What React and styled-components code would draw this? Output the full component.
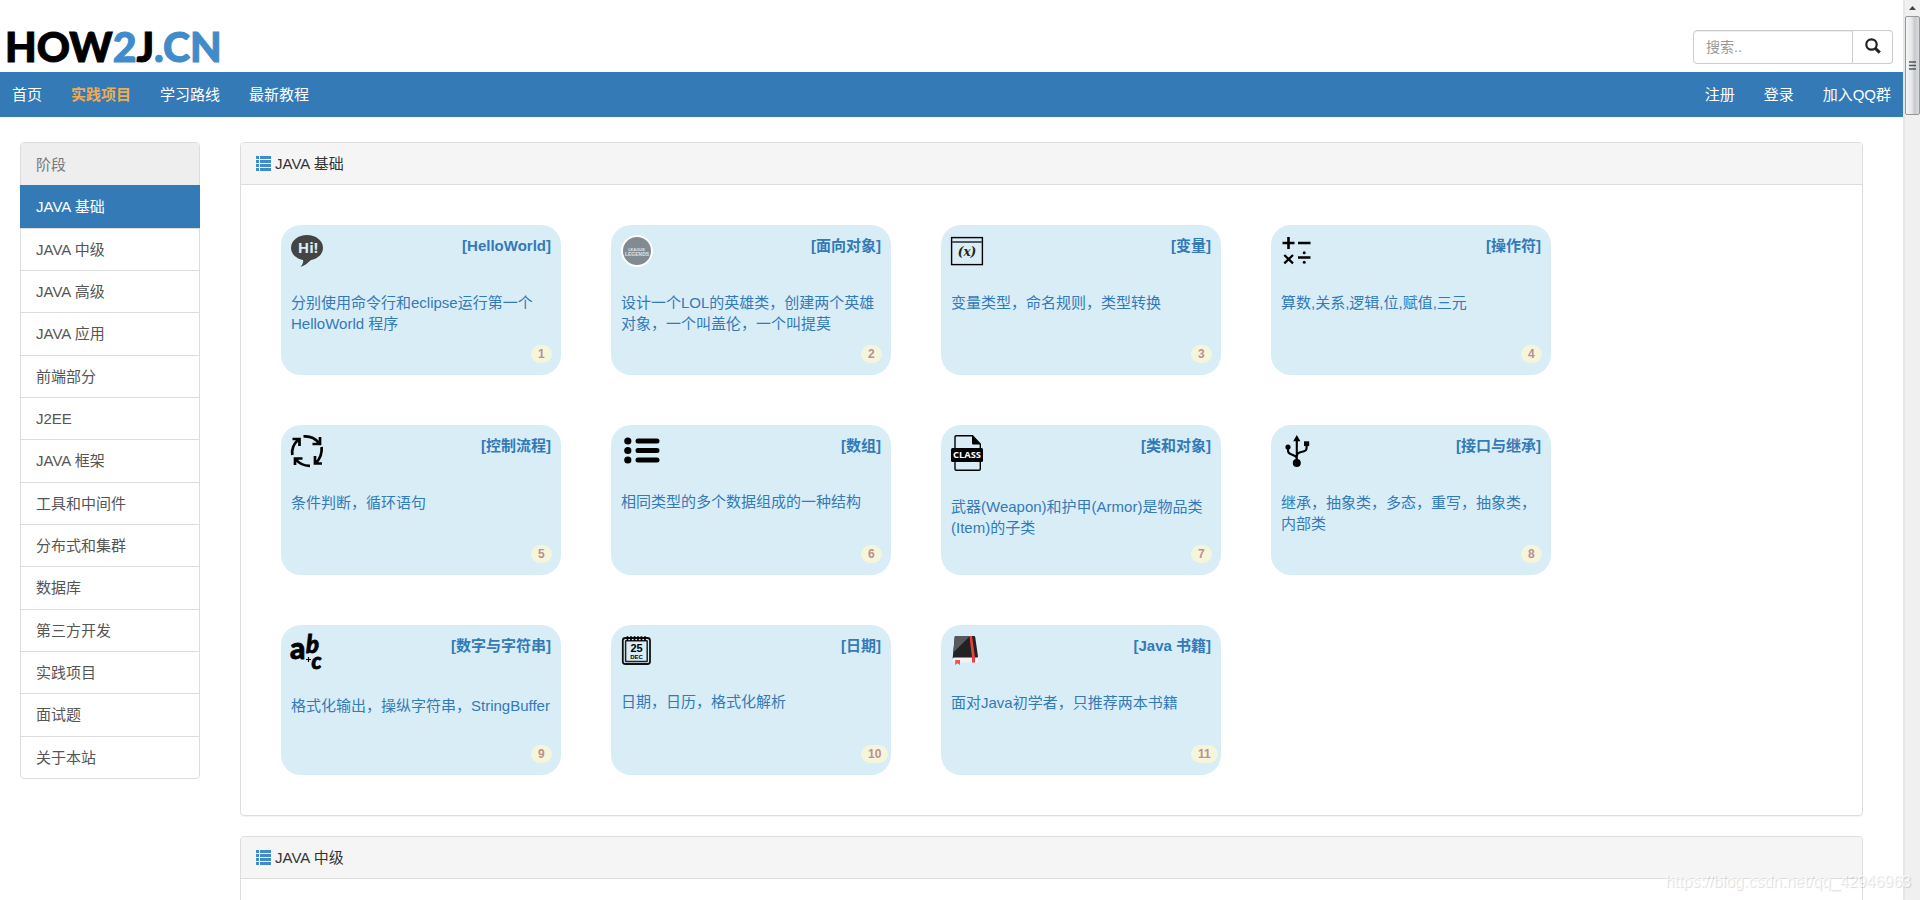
import React from 'react';
import styled, { createGlobalStyle } from 'styled-components';

const GlobalStyle = createGlobalStyle`
    * {
        box-sizing: border-box;
    }
    body {
        margin: 0;
        background: #fff;
        color: #333;
        font-family: "Liberation Sans", Arial, "Noto Sans CJK SC", sans-serif;
        font-size: 15px;
        line-height: 21px;
    }
    a {
        text-decoration: none;
    }
`;

const Window = styled.div`
    position: relative;
    display: flex;
    height: 100vh;
    overflow: hidden;
`;

const Page = styled.div`
    flex: 1;
    min-width: 0;
`;

const Header = styled.header`
    display: flex;
    justify-content: space-between;
    align-items: flex-end;
    height: 72px;
    padding: 0 10px 8px 5px;
`;

const Logo = styled.a`
    font-family: Lato, "Liberation Sans", sans-serif;
    font-size: 41px;
    font-weight: 900;
    line-height: 34px;
    color: #000;
    -webkit-text-stroke: 1px currentColor;
    span {
        color: #428bca;
    }
`;

const SearchForm = styled.form`
    display: flex;
    width: 200px;
    height: 34px;
`;

const SearchInput = styled.input`
    flex: 1;
    min-width: 0;
    padding: 6px 12px;
    border: 1px solid #ccc;
    border-radius: 4px 0 0 4px;
    box-shadow: inset 0 1px 1px rgba(0, 0, 0, 0.075);
    font-family: inherit;
    font-size: 14px;
    color: #555;
    outline: none;
    &::placeholder {
        color: #999;
        opacity: 1;
    }
`;

const SearchButton = styled.button`
    width: 40px;
    padding: 0 0 2px;
    border: 1px solid #ccc;
    border-left: 0;
    border-radius: 0 4px 4px 0;
    background: #fff;
    color: #222;
    cursor: pointer;
    svg {
        display: block;
        margin: 0 auto;
    }
`;

const Nav = styled.nav`
    display: flex;
    justify-content: space-between;
    align-items: center;
    height: 45px;
    padding: 0 12px;
    background: #337ab7;
`;

const NavGroup = styled.div`
    display: flex;
    gap: 29px;
`;

const NavLink = styled.a`
    color: ${props => (props.$active ? '#f0ad4e' : '#fff')};
    font-weight: ${props => (props.$active ? 700 : 400)};
`;

const Main = styled.main`
    display: flex;
    align-items: flex-start;
    gap: 40px;
    padding: 25px 40px 0 20px;
`;

const StageList = styled.div`
    display: grid;
    grid-auto-rows: 1fr;
    flex: 0 0 180px;
    min-height: 637px;
    border: 1px solid #ddd;
    border-radius: 4px;
`;

const stageItem = `
    display: flex;
    align-items: center;
    padding: 0 15px;
`;

const StageTitle = styled.div`
    ${stageItem}
    background: #eee;
    color: #777;
    border-radius: 3px 3px 0 0;
`;

const StageLink = styled.a`
    ${stageItem}
    margin: ${props => (props.$active ? '0 -1px' : '0')};
    padding: ${props => (props.$active ? '0 16px' : '0 15px')};
    border-top: 1px solid ${props => (props.$active ? '#337ab7' : '#ddd')};
    background: ${props => (props.$active ? '#337ab7' : 'transparent')};
    color: ${props => (props.$active ? '#fff' : '#555')};
`;

const Panels = styled.div`
    flex: 1;
    min-width: 0;
`;

const Panel = styled.section`
    margin-bottom: 20px;
    border: 1px solid #ddd;
    border-radius: 4px;
    box-shadow: 0 1px 1px rgba(0, 0, 0, 0.05);
`;

const PanelHeading = styled.h3`
    display: flex;
    align-items: center;
    gap: 4px;
    margin: 0;
    padding: 10px 15px;
    border-bottom: 1px solid #ddd;
    border-radius: 3px 3px 0 0;
    background: #f5f5f5;
    font-size: 15px;
    font-weight: 400;
`;

const PanelBody = styled.div`
    display: flex;
    flex-wrap: wrap;
    gap: 50px;
    min-height: 80px;
    padding: 40px;
`;

const Card = styled.a`
    display: flex;
    flex-direction: column;
    width: 280px;
    height: 150px;
    padding: 10px;
    border-radius: 20px;
    background: #d9edf7;
    color: #337ab7;
`;

const CardTop = styled.div`
    display: flex;
    justify-content: space-between;
    align-items: flex-start;
    margin-bottom: 25px;
    svg {
        display: block;
        overflow: visible;
    }
`;

const CardTitle = styled.strong`
    font-weight: 700;
`;

const CardText = styled.div`
    flex: 1;
`;

/* two digit badges grow to the right, past the padding */
const BadgeSlot = styled.div`
    align-self: flex-end;
    display: flex;
    width: 20px;
    padding-bottom: 2px;
`;

const Badge = styled.span`
    padding: 3px 7px;
    border-radius: 10px;
    background: #f5f5dc;
    color: #bc8f8f;
    font-size: 12px;
    font-weight: 700;
    line-height: 12px;
`;

const ScrollRail = styled.div`
    flex: 0 0 17px;
    display: flex;
    flex-direction: column;
    align-items: center;
    border-left: 2px solid #e6e6e6;
    background: #f0f0f0;
`;

const ScrollArrow = styled.div`
    display: flex;
    align-items: center;
    height: 16px;
`;

const ScrollThumb = styled.div`
    display: flex;
    align-items: center;
    justify-content: center;
    width: 15px;
    height: 99px;
    border: 1px solid #979797;
    border-radius: 2px;
    background: linear-gradient(to right, #f5f5f5 0%, #e6e6e8 45%, #c9cacd 65%, #d9dadc 100%);
`;

const Watermark = styled.div`
    position: absolute;
    right: 9px;
    bottom: 8px;
    font-size: 16px;
    color: rgba(255, 255, 255, 0.8);
    text-shadow: 1px 1px 1px rgba(0, 0, 0, 0.15);
`;

const SearchIcon = () => (
    <svg width="16" height="16" viewBox="0 0 16 16" fill="none" stroke="currentColor">
        <circle cx="6.5" cy="6.5" r="5.2" strokeWidth="2.2" />
        <path d="M10.3 10.3 L14.8 14.6" strokeWidth="3" />
    </svg>
);

const ListIcon = () => (
    <svg width="15" height="15" viewBox="0 0 15 15" fill="#428bca">
        {[0, 4, 8, 12].map(y => (
            <React.Fragment key={y}>
                <rect x="0" y={y} width="3" height="3" />
                <rect x="4" y={y} width="11" height="3" />
            </React.Fragment>
        ))}
    </svg>
);

const HelloIcon = () => (
    <svg width="32" height="32" viewBox="0 0 32 32">
        <ellipse cx="16" cy="12.8" rx="16" ry="12.8" fill="#444" />
        <path d="M12 24 Q13 28 9.5 32 Q17 29 20.5 24 Z" fill="#444" />
        <text x="17" y="18" textAnchor="middle" fontFamily="Open Sans, sans-serif" fontSize="15" fontWeight="700" fill="#d9edf7">Hi!</text>
    </svg>
);

const LeagueIcon = () => (
    <svg width="32" height="32" viewBox="0 0 32 32">
        <circle cx="16" cy="16" r="15" fill="#838b92" stroke="#fff" strokeWidth="2" />
        <g fill="#dde2e6" textAnchor="middle" fontFamily="Liberation Sans, sans-serif" fontWeight="700">
            <text x="15.5" y="15.5" fontSize="4">LEAGUE</text>
            <text x="16" y="21" fontSize="5">LEGENDS</text>
        </g>
    </svg>
);

const VariableIcon = () => (
    <svg width="32" height="32" viewBox="0 0 32 32">
        <rect x="0.6" y="2.6" width="30.8" height="27" fill="none" stroke="#000" strokeWidth="1.4" />
        <path d="M1 7 H31" stroke="#555a5e" strokeWidth="2" />
        <text x="16" y="21" textAnchor="middle" fontFamily="DejaVu Serif, serif" fontSize="12" fontStyle="italic" fontWeight="700" fill="#222">(x)</text>
    </svg>
);

const OperatorIcon = () => (
    <svg width="32" height="32" viewBox="0 0 32 32" fill="none" stroke="#000" strokeWidth="2.6">
        <path d="M1.5 8 H13.5 M7.5 2 V14 M17 8 H29.5 M17 22.5 H29.5" />
        <path d="M3.3 20 L12 28.3 M12 20 L3.3 28.3" strokeWidth="2.3" />
        <circle cx="23.2" cy="17.8" r="1.5" fill="#000" stroke="none" />
        <circle cx="23.2" cy="27.2" r="1.5" fill="#000" stroke="none" />
    </svg>
);

const FlowIcon = () => (
    <svg width="32" height="32" viewBox="0 0 32 32" fill="none" stroke="#000" strokeWidth="2.7">
        <path d="M12.5 1.4 Q22 0.5 28 8 M29 2 V9 H21.5" />
        <path d="M1.4 20 Q0 11 7.5 4.5 M1.5 4 H8.5 V11" />
        <path d="M19 30.8 Q10 31 4.5 24 M4 30 V23.5 H11.5" />
        <path d="M30.6 12 Q31.5 21 25 28 M24 21 V28.5 H31" />
    </svg>
);

const ArrayIcon = () => (
    <svg width="40" height="31" viewBox="0 0 40 31" stroke="#000" strokeLinecap="round">
        {[6, 15.5, 25].map(y => (
            <React.Fragment key={y}>
                <circle cx="6.8" cy={y} r="3.6" stroke="none" />
                <path d={`M17 ${y} H36`} strokeWidth="5" />
            </React.Fragment>
        ))}
    </svg>
);

const ClassIcon = () => (
    <svg width="32" height="36" viewBox="0 0 32 36">
        <path d="M4 14 V2 Q4 0.7 5.3 0.7 H21.5 L29.3 9 V34 Q29.3 35.3 28 35.3 H5.3 Q4 35.3 4 34 Z" fill="none" stroke="#000" strokeWidth="1.4" />
        <path d="M21 0.7 L29.5 9.5 H22 Q21 9.5 21 8.5 Z" />
        <rect x="0" y="13" width="32" height="14" rx="1.5" />
        <text x="16" y="23.4" textAnchor="middle" fontFamily="Open Sans, sans-serif" fontSize="9.4" fontWeight="700" fill="#fff">CLASS</text>
    </svg>
);

const InterfaceIcon = () => (
    <svg width="32" height="32" viewBox="0 0 32 32">
        <path d="M15.8 0 L19.4 6.2 H12.2 Z" />
        <circle cx="15.8" cy="28" r="4" />
        <circle cx="7" cy="12" r="2.6" />
        <rect x="23" y="6.3" width="5.2" height="4.8" />
        <path d="M15.8 5 V28 M7 12 V15.5 Q7 18 9.5 19 L13 20.5 Q15.8 21.5 15.8 24 M25.6 10 V13 Q25.6 15.5 23 16.2 L18.5 17.5 Q15.8 18.3 15.8 21" fill="none" stroke="#000" strokeWidth="2.1" />
    </svg>
);

const StringIcon = () => (
    <svg width="32" height="35" viewBox="0 0 32 35" fontFamily="Lato, sans-serif" fontWeight="900" stroke="#000" strokeWidth="0.8">
        <text x="-1" y="23.5" fontSize="30">a</text>
        <text x="15" y="17.5" fontSize="24" fontStyle="italic">b</text>
        <text x="20.5" y="34" fontSize="22" fontStyle="italic">c</text>
        <path d="M15 24.5 H20 M17.5 22 V27" strokeWidth="1.2" />
    </svg>
);

const DateIcon = () => (
    <svg width="32" height="31" viewBox="0 0 32 31">
        <rect x="1.8" y="3" width="27.2" height="26" rx="2.5" fill="none" stroke="#111" strokeWidth="1.8" />
        <rect x="4.6" y="5.8" width="21.6" height="20.6" rx="0.5" fill="none" stroke="#222" strokeWidth="1.5" />
        <path d="M6.5 1.2 V6 M10 1.2 V6 M13.5 1.2 V6 M17 1.2 V6 M20.5 1.2 V6 M24 1.2 V6" stroke="#000" strokeWidth="1.7" />
        <g textAnchor="middle" fontFamily="Liberation Sans Narrow, Liberation Sans, sans-serif" fontWeight="700">
            <text x="15.5" y="17.2" fontSize="11">25</text>
            <text x="15.5" y="24.4" fontSize="6">DEC</text>
        </g>
    </svg>
);

const BookIcon = () => (
    <svg width="32" height="32" viewBox="0 0 32 32">
        <path d="M2 23 H27 V27.5 H3.5 Q1.3 27 1.5 24.5 Z" fill="#f2f2f4" />
        <path d="M4.5 1 H23 Q24 1 24.2 2 L27 21.5 Q27 22.6 26 22.6 H3 Q1.8 22.8 1.6 24 L3.7 2 Q3.8 1 4.5 1 Z" fill="#222" />
        <path d="M4.5 1 H19 L2.4 17.5 L3.7 2 Q3.8 1 4.5 1 Z" fill="#58595e" />
        <path d="M18.5 1 H21 L24 22.5 V27.5 H21 V22.5 Z" fill="#e8403f" />
        <path d="M4.2 25 H9 V30 L6.6 28.2 L4.2 30 Z" fill="#f0504e" />
    </svg>
);

const navLeft = ['首页', '实践项目', '学习路线', '最新教程'];
const navRight = ['注册', '登录', '加入QQ群'];

const stages = [
    'JAVA 基础', 'JAVA 中级', 'JAVA 高级', 'JAVA 应用', '前端部分', 'J2EE', 'JAVA 框架',
    '工具和中间件', '分布式和集群', '数据库', '第三方开发', '实践项目', '面试题', '关于本站',
];

const lessons = [
    { title: 'HelloWorld', text: '分别使用命令行和eclipse运行第一个HelloWorld 程序', Icon: HelloIcon },
    { title: '面向对象', text: '设计一个LOL的英雄类，创建两个英雄对象，一个叫盖伦，一个叫提莫', Icon: LeagueIcon },
    { title: '变量', text: '变量类型，命名规则，类型转换', Icon: VariableIcon },
    { title: '操作符', text: '算数,关系,逻辑,位,赋值,三元', Icon: OperatorIcon },
    { title: '控制流程', text: '条件判断，循环语句', Icon: FlowIcon },
    { title: '数组', text: '相同类型的多个数据组成的一种结构', Icon: ArrayIcon },
    { title: '类和对象', text: '武器(Weapon)和护甲(Armor)是物品类(Item)的子类', Icon: ClassIcon },
    { title: '接口与继承', text: '继承，抽象类，多态，重写，抽象类，内部类', Icon: InterfaceIcon },
    { title: '数字与字符串', text: '格式化输出，操纵字符串，StringBuffer', Icon: StringIcon },
    { title: '日期', text: '日期，日历，格式化解析', Icon: DateIcon },
    { title: 'Java 书籍', text: '面对Java初学者，只推荐两本书籍', Icon: BookIcon },
];

class LessonCard extends React.Component {
    render() {
        const { lesson, number } = this.props;
        const Icon = lesson.Icon;
        return (
            <Card href="#">
                <CardTop>
                    <Icon />
                    <CardTitle>[{lesson.title}]</CardTitle>
                </CardTop>
                <CardText>{lesson.text}</CardText>
                <BadgeSlot>
                    <Badge>{number}</Badge>
                </BadgeSlot>
            </Card>
        );
    }
}

class App extends React.Component {
    render() {
        return (
            <Window>
                <GlobalStyle />
                <Page>
                    <Header>
                        <Logo href="#">HOW<span>2</span>J<span>.CN</span></Logo>
                        <SearchForm>
                            <SearchInput type="text" placeholder="搜索.." aria-label="搜索" />
                            <SearchButton type="button" aria-label="搜索">
                                <SearchIcon />
                            </SearchButton>
                        </SearchForm>
                    </Header>
                    <Nav>
                        <NavGroup>
                            {navLeft.map(name => (
                                <NavLink href="#" key={name} $active={name === '实践项目'}>{name}</NavLink>
                            ))}
                        </NavGroup>
                        <NavGroup>
                            {navRight.map(name => (
                                <NavLink href="#" key={name}>{name}</NavLink>
                            ))}
                        </NavGroup>
                    </Nav>
                    <Main>
                        <StageList>
                            <StageTitle>阶段</StageTitle>
                            {stages.map((name, i) => (
                                <StageLink href="#" key={name} $active={i === 0}>{name}</StageLink>
                            ))}
                        </StageList>
                        <Panels>
                            <Panel>
                                <PanelHeading><ListIcon />JAVA 基础</PanelHeading>
                                <PanelBody>
                                    {lessons.map((lesson, i) => (
                                        <LessonCard key={lesson.title} lesson={lesson} number={i + 1} />
                                    ))}
                                </PanelBody>
                            </Panel>
                            <Panel>
                                <PanelHeading><ListIcon />JAVA 中级</PanelHeading>
                                <PanelBody />
                            </Panel>
                        </Panels>
                    </Main>
                </Page>
                <ScrollRail>
                    <ScrollArrow>
                        <svg width="7" height="4" viewBox="0 0 7 4"><path d="M3.5 0 L7 4 H0 Z" fill="#444" /></svg>
                    </ScrollArrow>
                    <ScrollThumb>
                        <svg width="7" height="9" viewBox="0 0 7 9"><path d="M0 1 H7 M0 4.5 H7 M0 8 H7" stroke="#555" strokeWidth="1.4" /></svg>
                    </ScrollThumb>
                </ScrollRail>
                <Watermark>https://blog.csdn.net/qq_42946963</Watermark>
            </Window>
        );
    }
}

export default App;
